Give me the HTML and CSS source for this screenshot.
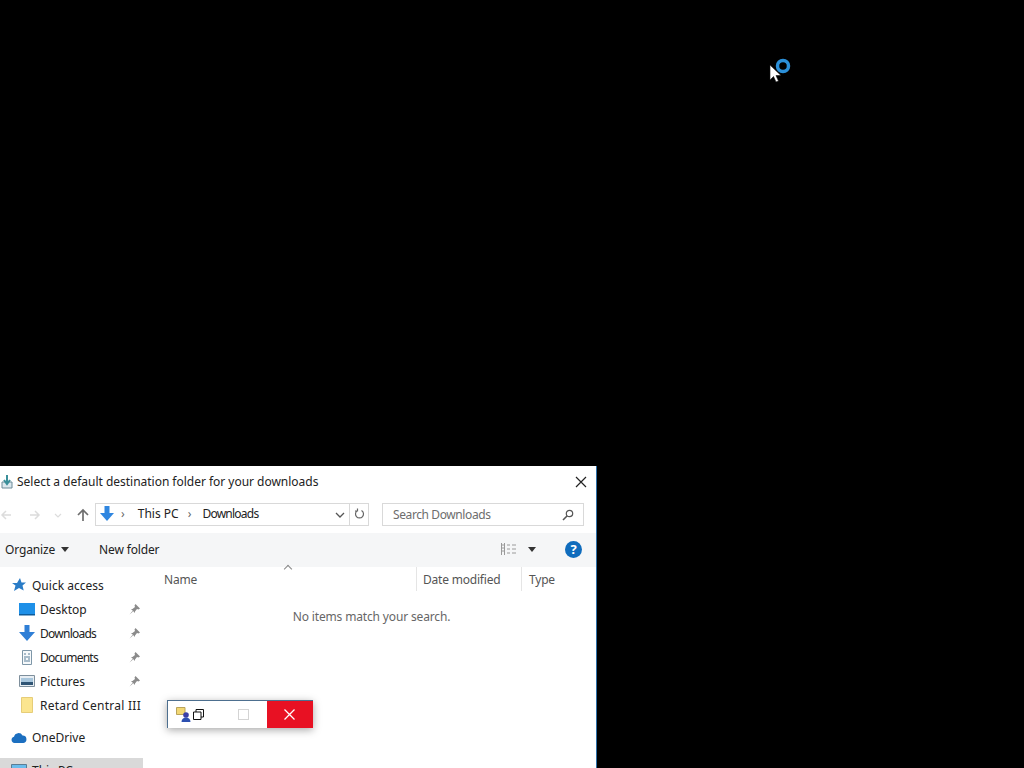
FILE: index.html
```html
<!DOCTYPE html>
<html lang="en">
<head>
    <meta charset="UTF-8">
    <title>Select a default destination folder</title>
    <link rel="stylesheet" href="styles.css">
</head>
<body>
    <!-- Busy cursor -->
    <svg class="cursor" width="26" height="30" viewBox="0 0 26 30">
        <circle cx="17" cy="10" r="5.5" fill="none" stroke="#2b8fd8" stroke-width="3.5"/>
        <path d="M4 9v15l3.500-3.500 2.500 5.500 2.500-1-2.500-5.500h5z" fill="#fff" stroke="#111" stroke-width=".6"/>
    </svg>

    <!-- File dialog -->
    <div class="dialog">
        <div class="titlebar">
            <svg class="title-icon" width="12" height="16" viewBox="0 0 12 16">
                <path d="M1 8h10v6H1z" fill="#dbe8ee" stroke="#6d8b99"/>
                <path d="M6 1v8M3 6l3 4 3-4" fill="none" stroke="#3a8f9a" stroke-width="2"/>
            </svg>
            <span class="title-text">Select a default destination folder for your downloads</span>
            <svg class="close" width="12" height="12" viewBox="0 0 12 12">
                <path d="M1 1l10 10M11 1L1 11" stroke="#222" stroke-width="1.2"/>
            </svg>
        </div>

        <div class="navbar">
            <div class="nav-buttons">
                <svg class="nav-back" width="12" height="12" viewBox="0 0 12 12"><path d="M11 6H2M6 2L2 6l4 4" fill="none" stroke="#dcdcdc" stroke-width="1.5"/></svg>
                <svg class="nav-forward" width="12" height="12" viewBox="0 0 12 12"><path d="M1 6h9M6 2l4 4-4 4" fill="none" stroke="#dcdcdc" stroke-width="1.5"/></svg>
                <svg class="nav-recent" width="8" height="12" viewBox="0 0 8 12"><path d="M1 5l3 3 3-3" fill="none" stroke="#dcdcdc" stroke-width="1.2"/></svg>
                <svg class="nav-up" width="14" height="14" viewBox="0 0 14 14"><path d="M7 13V2M2 7l5-5 5 5" fill="none" stroke="#6e6e6e" stroke-width="1.7"/></svg>
            </div>
            <div class="address">
                <svg width="16" height="18" viewBox="0 0 16 18"><path d="M5.500 1h5v7H15l-7 8-7-8h4.500z" fill="#2f86e0"/></svg>
                <span class="crumb-sep first">›</span>
                <span class="crumb">This PC</span>
                <span class="crumb-sep">›</span>
                <span class="crumb crumb-folder">Downloads</span>
                <svg class="address-down" width="10" height="6" viewBox="0 0 10 6"><path d="M1 1l4 4 4-4" fill="none" stroke="#555" stroke-width="1.3"/></svg>
                <svg class="refresh" width="11" height="12" viewBox="0 0 11 12"><path d="M7.500 2.500a4 4 0 1 1-4 0M3.500 .5v2.500H1" fill="none" stroke="#666" stroke-width="1.200"/></svg>
            </div>
            <div class="search">
                <span>Search Downloads</span>
                <svg width="12" height="12" viewBox="0 0 12 12"><circle cx="7.500" cy="4.500" r="3.200" fill="none" stroke="#555" stroke-width="1.200"/><path d="M5 7l-4 4" stroke="#555" stroke-width="1.600"/></svg>
            </div>
        </div>

        <div class="toolbar">
            <span class="tool">Organize</span>
            <span class="arrow"></span>
            <span class="tool new-folder">New folder</span>
            <svg class="view-icon" width="16" height="12" viewBox="0 0 16 12"><path d="M.5 0v12M3.500 0v12M.5 2h3M.5 5h3M.5 8h3M6 2h3M11 2h4M6 6h3M11 6h4M6 10h3M11 10h4" stroke="#9a9a9a"/></svg>
            <span class="arrow view-arrow"></span>
            <span class="help">?</span>
        </div>

        <div class="content">
            <div class="sidebar">
                <div class="nav-item top">
                    <svg width="14" height="14" viewBox="0 0 14 14"><path d="M8 0l1.500 4.500H14l-3.500 3 1.200 5L7 10l-5 3 1.500-5.500L0 5h5z" fill="#2a7cc7"/></svg>
                    <span>Quick access</span>
                </div>
                <div class="nav-item sub">
                    <svg width="16" height="13" viewBox="0 0 16 13"><path d="M0 0h16v12H0z" fill="#1e90e8"/><path d="M0 11h16v1.500H0z" fill="#0d5c9c"/></svg>
                    <span>Desktop</span>
                    <svg class="pin" width="11" height="11" viewBox="0 0 11 11"><path d="M6.500 0L11 4.500 9.500 5.500 8 5 6 7.500 6 9 2 5 3.500 5 6 3 5.500 1.500zM3.500 7L.5 10.500 4 7.500z" fill="#8b8b8b"/></svg>
                </div>
                <div class="nav-item sub">
                    <svg width="16" height="16" viewBox="0 0 16 16"><path d="M5.500 0h5v7H16l-8 9-8-9h5.500z" fill="#2f7fd6"/></svg>
                    <span class="tight">Downloads</span>
                    <svg class="pin" width="11" height="11" viewBox="0 0 11 11"><path d="M6.500 0L11 4.500 9.500 5.500 8 5 6 7.500 6 9 2 5 3.500 5 6 3 5.500 1.500zM3.500 7L.5 10.500 4 7.500z" fill="#8b8b8b"/></svg>
                </div>
                <div class="nav-item sub">
                    <svg width="16" height="15" viewBox="0 0 16 15"><path d="M3.500 .5h9v14h-9z" fill="#f6f9fb" stroke="#7e97a8"/><path d="M5 4h2M9 4h2M5 7h6M5 9h2M9 9h2M5 11h6" stroke="#5b7f99"/></svg>
                    <span class="tight">Documents</span>
                    <svg class="pin" width="11" height="11" viewBox="0 0 11 11"><path d="M6.500 0L11 4.500 9.500 5.500 8 5 6 7.500 6 9 2 5 3.500 5 6 3 5.500 1.500zM3.500 7L.5 10.500 4 7.500z" fill="#8b8b8b"/></svg>
                </div>
                <div class="nav-item sub">
                    <svg width="16" height="12" viewBox="0 0 16 12"><path d="M.5 .5h15v11H.5z" fill="#e8eef3" stroke="#7e8f9c"/><path d="M2 3h12v4H2z" fill="#a8c6dc"/><path d="M2 7h12v3H2z" fill="#2f5474"/></svg>
                    <span>Pictures</span>
                    <svg class="pin" width="11" height="11" viewBox="0 0 11 11"><path d="M6.500 0L11 4.500 9.500 5.500 8 5 6 7.500 6 9 2 5 3.500 5 6 3 5.500 1.500zM3.500 7L.5 10.500 4 7.500z" fill="#8b8b8b"/></svg>
                </div>
                <div class="nav-item sub">
                    <svg width="16" height="16" viewBox="0 0 16 16"><path d="M2.500 .5h11v15h-11z" fill="#fbe58f" stroke="#e6cd78"/></svg>
                    <span class="wide">Retard Central III</span>
                </div>
                <div class="nav-item top onedrive">
                    <svg width="16" height="11" viewBox="0 0 16 11"><path d="M3.500 11a3.200 3.200 0 0 1-.5-6.300A4.600 4.600 0 0 1 11.500 3.500 3.800 3.800 0 0 1 12.500 11z" fill="#1c6fc0"/></svg>
                    <span>OneDrive</span>
                </div>
                <div class="nav-item top selected">
                    <svg width="16" height="13" viewBox="0 0 16 13"><path d="M.5 .5h15v10H.5z" fill="#6bbcec" stroke="#5a7d95"/></svg>
                    <span>This PC</span>
                </div>
            </div>

            <div class="files">
                <div class="file-header">
                    <span class="sort-arrow"></span>
                    <div class="col col-name">Name</div>
                    <div class="col col-date">Date modified</div>
                    <div class="col col-type">Type</div>
                </div>
                <div class="empty">No items match your search.</div>
            </div>
        </div>
    </div>

    <!-- Small floating window -->
    <div class="mini-window">
        <svg class="mini-icon" width="15" height="15" viewBox="0 0 15 15">
            <path d="M.5 .5h8.500v7H.5z" fill="#f2d774" stroke="#b9a35a"/>
            <circle cx="10" cy="8" r="2.800" fill="#3a3fa8"/>
            <path d="M5.500 15c0-3 2-4.500 4.500-4.500s4.500 1.500 4.500 4.500z" fill="#2c4fb0"/>
        </svg>
        <svg class="mini-restore" width="11" height="11" viewBox="0 0 11 11">
            <path d="M.5 3h7.500v7.500H.5zM3 3V.5h7.500V8H8" fill="#fff" stroke="#111"/>
        </svg>
        <span class="mini-max"></span>
        <div class="mini-close">
            <svg width="11" height="11" viewBox="0 0 11 11"><path d="M.5 .5l10 10M10.500 .5l-10 10" stroke="#fff" stroke-width="1.300"/></svg>
        </div>
    </div>
</body>
</html>
```

FILE: styles.css
```css
html, body {
    margin: 0;
    height: 100%;
}

body {
    background: #000;
    overflow: hidden;
    position: relative;
    font-family: "Noto Sans", Arial, sans-serif;
    font-size: 12px;
    color: #222;
}

.cursor {
    position: absolute;
    left: 766px;
    top: 56px;
}

/* Dialog */
.dialog {
    position: absolute;
    left: 0;
    top: 466px;
    width: 596px;
    height: 302px;
    background: #fff;
    border-right: 1px solid #2c6fa8;
    overflow: hidden;
}

.titlebar {
    height: 31px;
    display: flex;
    align-items: center;
    padding-left: 1px;
}

.title-icon {
    margin-right: 4px;
}

.title-text {
    letter-spacing: -.02px;
}

.close {
    margin-left: auto;
    margin-right: 9px;
}

.navbar {
    height: 36px;
    display: flex;
    align-items: flex-start;
    padding-top: 6px;
    box-sizing: border-box;
}

.nav-buttons {
    width: 95px;
    height: 23px;
    display: flex;
    align-items: center;
}

.nav-forward {
    margin-left: 17px;
}

.nav-recent {
    margin-left: 13px;
}

.nav-up {
    margin-left: 14px;
}

.address {
    width: 274px;
    height: 23px;
    border: 1px solid #d9d9d9;
    box-sizing: border-box;
    display: flex;
    align-items: center;
    padding-left: 3px;
    padding-bottom: 2px;
    position: relative;
}

.crumb-folder {
    letter-spacing: -.75px;
}

.crumb-sep {
    color: #666;
    margin: 0 11px 0 9px;
}

.crumb-sep.first {
    margin: 0 13px 0 6px;
}

.address-down {
    position: absolute;
    left: 239px;
    top: 8px;
}

.refresh {
    position: absolute;
    left: 258px;
    top: 4px;
}

.address::after {
    content: "";
    position: absolute;
    left: 253px;
    top: 0;
    bottom: 0;
    border-left: 1px solid #d9d9d9;
}

.search {
    width: 202px;
    height: 23px;
    margin-left: 13px;
    border: 1px solid #d9d9d9;
    box-sizing: border-box;
    display: flex;
    align-items: center;
    justify-content: space-between;
    padding: 0 9px 0 10px;
    color: #6d6d6d;
    letter-spacing: -.4px;
}

.toolbar {
    height: 34px;
    background: #f5f6f7;
    display: flex;
    align-items: center;
    padding: 0 0 2px 5px;
    box-sizing: border-box;
}

.tool {
    letter-spacing: -.15px;
}

.arrow {
    width: 0;
    height: 0;
    margin-left: 6px;
    border-left: 4px solid transparent;
    border-right: 4px solid transparent;
    border-top: 5px solid #333;
}

.new-folder {
    margin-left: 30px;
}

.view-icon {
    margin-left: auto;
}

.view-arrow {
    margin-left: 11px;
}

.help {
    width: 17px;
    height: 17px;
    margin: 0 14px 0 29px;
    border-radius: 50%;
    background: #0f6cbd;
    color: #fff;
    font-weight: bold;
    font-size: 13px;
    line-height: 17px;
    text-align: center;
}

/* Main area */
.content {
    display: flex;
}

.sidebar {
    width: 143px;
    flex: none;
    padding-top: 6px;
}

.nav-item {
    height: 24px;
    display: flex;
    align-items: center;
    white-space: nowrap;
    overflow: hidden;
    position: relative;
}

.nav-item.top {
    padding-left: 11px;
}

.nav-item.top svg {
    margin-right: 5px;
    width: 16px;
}

.nav-item.sub {
    padding-left: 19px;
}

.nav-item.sub > svg:first-child {
    margin-right: 5px;
}

.nav-item .tight {
    letter-spacing: -.75px;
}

.nav-item .wide {
    letter-spacing: .25px;
}

.pin {
    position: absolute;
    left: 129px;
    top: 7px;
}

.onedrive {
    margin-top: 8px;
}

.selected {
    margin-top: 9px;
    background: #d9d9d9;
}

.files {
    flex: 1;
}

.file-header {
    height: 24px;
    display: flex;
    position: relative;
    align-items: center;
    color: #555;
    letter-spacing: -.2px;
}

.sort-arrow {
    position: absolute;
    left: 142px;
    top: -1px;
    width: 5px;
    height: 5px;
    border-left: 1px solid #888;
    border-top: 1px solid #888;
    transform: rotate(45deg);
}

.col {
    height: 100%;
    display: flex;
    align-items: center;
    box-sizing: border-box;
}

.col-name {
    width: 273px;
    padding-left: 21px;
}

.col-date {
    width: 105px;
    padding-left: 6px;
    border-left: 1px solid #e5e5e5;
}

.col-type {
    flex: 1;
    padding-left: 7px;
    border-left: 1px solid #e5e5e5;
}

.empty {
    margin-top: 17px;
    text-align: center;
    padding-left: 4px;
    color: #666;
    letter-spacing: -.15px;
}

/* Mini window */
.mini-window {
    position: absolute;
    left: 167px;
    top: 700px;
    width: 146px;
    height: 28px;
    background: #fff;
    border-left: 1px solid #4d6f8f;
    border-top: 1px solid #4d6f8f;
    box-sizing: border-box;
    box-shadow: 0 2px 8px rgba(0, 0, 0, .35);
    display: flex;
    align-items: center;
}

.mini-icon {
    margin-left: 8px;
}

.mini-restore {
    margin-left: 2px;
}

.mini-max {
    width: 9px;
    height: 9px;
    margin-left: 34px;
    border: 1px solid #d4d4d4;
}

.mini-close {
    margin-left: auto;
    width: 46px;
    height: 100%;
    background: #e81123;
    display: flex;
    align-items: center;
    justify-content: center;
    padding-right: 2px;
    box-sizing: border-box;
}
```
